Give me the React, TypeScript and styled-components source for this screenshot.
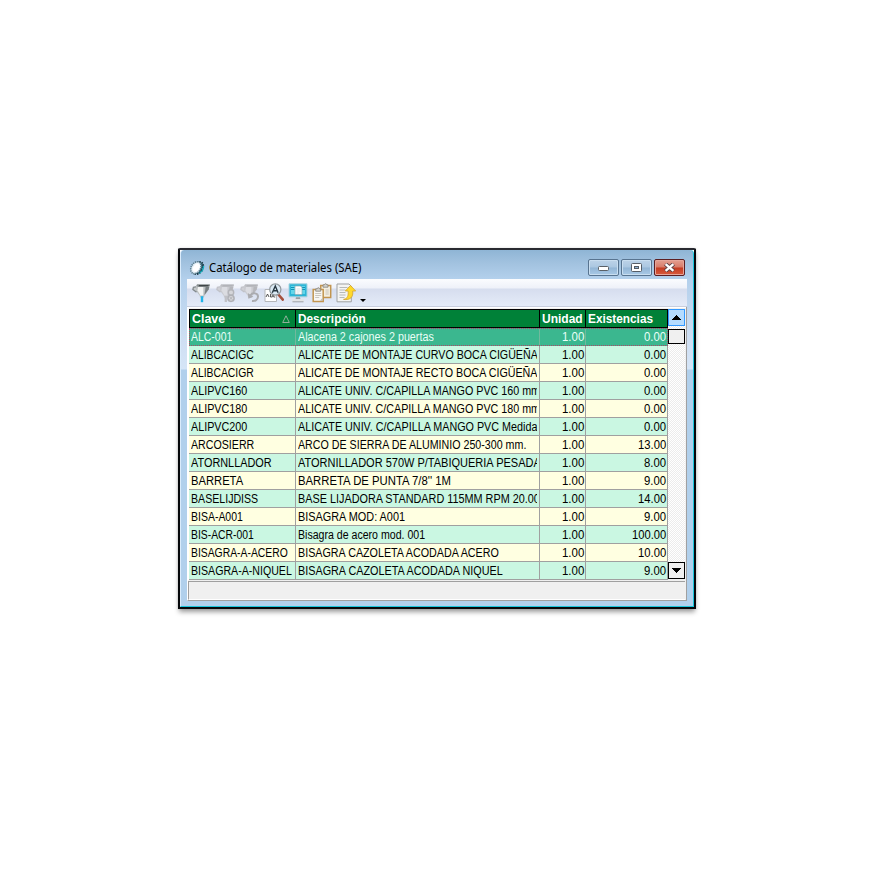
import React, { useLayoutEffect, useRef, useState } from "react";
import styled, { createGlobalStyle, css } from "styled-components";

const GlobalStyle = createGlobalStyle`
  * { box-sizing: border-box; }
  body { margin: 0; background: #fff; }
`;

const Desktop = styled.main`
  width: 880px;
  height: 880px;
  padding: 248px 0 0 178px;
  background: #fff;
`;

const Window = styled.section`
  width: 518px;
  height: 361px;
  border: 2px solid #05070a;
  border-top-color: #292a31;
  border-radius: 2px 2px 0 0;
  box-shadow: 0 4px 5px -1px rgba(0, 0, 0, 0.38), 0 0 3px rgba(0, 0, 0, 0.12);
`;

const Frame = styled.div`
  height: 357px;
  padding: 0 6px 6px 6px;
  border-left: 1px solid #d9ebfb;
  border-right: 1px solid #18c5dc;
  border-bottom: 1px solid #18c5dc;
  border-radius: 4px 4px 0 0;
  background:
    linear-gradient(#8fb5d5 0, #a3c3e0 14px, #b3d0ec 29px, #cfdff3 90px, #d5e5f7 119px, #b1d0ec 120px);
`;

const TitleBar = styled.header`
  display: flex;
  align-items: center;
  height: 29px;
  padding: 6px 2px 0 2px;
`;

const Title = styled.h1`
  flex: 1;
  margin: 0 0 0 4px;
  font: 400 12px/16px "Noto Sans", "Open Sans", sans-serif;
  color: #000;
`;

const Controls = styled.div`
  display: flex;
  gap: 2px;
`;

const ControlButton = styled.button<{ $close?: boolean }>`
  display: grid;
  place-items: center;
  width: 31px;
  height: 17px;
  padding: 0;
  border: 1px solid ${(p) => (p.$close ? "#5c1e22" : "#587490")};
  border-radius: 2px;
  box-shadow: inset 0 0 0 1px ${(p) => (p.$close ? "#e6a69a" : "#c9def0")};
  background: ${(p) =>
    p.$close
      ? "linear-gradient(#e3a091 0, #d87b69 48%, #c33b22 52%, #d95c3e 100%)"
      : "linear-gradient(#bdd3e8 0, #abc7e1 48%, #92b5d5 52%, #a9c9e6 100%)"};
`;

const Toolbar = styled.nav`
  display: flex;
  align-items: center;
  gap: 4px;
  height: 28px;
  padding: 0 0 0 4.5px;
  border-bottom: 1px solid #c8cede;
  background: linear-gradient(#fbfcfe 0, #eef1f9 9px, #d6ddee 10px, #dde4f3 18px, #e4ebf8 27px);
`;

const Drop = styled.div`
  align-self: flex-end;
  width: 6px;
  height: 9px;
  margin-left: 0.5px;
  line-height: 0;
`;

const Client = styled.div`
  height: 294px;
  border-left: 1px solid #fff;
  border-right: 1px solid #a0a0a0;
  border-bottom: 1px solid #a0a0a0;
  background: #f0f0f0;
`;

const GridFrame = styled.div`
  display: flex;
  height: 273px;
  padding: 1px 0 0 0;
  border-top: 1px solid #fff;
  border-left: 1px solid #fff;
`;

const Table = styled.div`
  width: 479px;
`;

const HeaderRow = styled.div`
  display: grid;
  grid-template-columns: 106px 244px 46px 82px;
  height: 19px;
  border-top: 1px solid #000;
  border-bottom: 1px solid #000;
  border-left: 1px solid #000;
  background: #008138;
`;

const HeaderCell = styled.div`
  display: flex;
  align-items: center;
  justify-content: space-between;
  padding: 2px 5px 0 2px;
  border-right: 1px solid #000;
  font: 700 12px/15px "Liberation Sans", Arial, sans-serif;
  color: #fff;
`;

const Row = styled.div<{ $selected: boolean; $even: boolean }>`
  display: grid;
  grid-template-columns: 107px 244px 46px 82px;
  height: 18px;
  color: ${(p) => (p.$selected ? "#eafff7" : "#000")};
  background: ${(p) => (p.$selected ? "#3bb78f" : p.$even ? "#ffffe1" : "#caf7e2")};
  border-bottom: 1px solid #a0a0a0;
  ${(p) =>
    p.$selected &&
    css`
      grid-template-columns: 106px 244px 46px 81px;
      border: 1px dotted #b04468;
    `}
`;

const Cell = styled.div<{ $right?: boolean; $selected?: boolean; $last?: boolean; $first?: boolean }>`
  display: flex;
  justify-content: ${(p) => (p.$right ? "flex-end" : "flex-start")};
  min-width: 0;
  padding: ${(p) => (p.$selected ? 0 : 1)}px ${(p) => (p.$right ? 1 : 2)}px 0
    ${(p) => (p.$selected && p.$first ? 1 : 2)}px;
  border-right: ${(p) => (p.$last && p.$selected ? 0 : 1)}px solid ${(p) => (p.$selected ? "#72b89d" : "#a0a0a0")};
  font: 400 12.5px/16px "Liberation Sans", Arial, sans-serif;
`;

const Clip = styled.div`
  width: 240px;
  overflow: hidden;
`;

const FitBox = styled.span<{ $width: number }>`
  display: block;
  flex: none;
  width: ${(p) => p.$width}px;
  white-space: nowrap;
`;

const FitText = styled.span`
  display: inline-block;
  transform-origin: 0 50%;
`;

/** Condenses or widens a text so that it takes exactly the given width. */
const Fit = ({ width, children }: { width: number; children: string }) => {
  const ref = useRef<HTMLSpanElement>(null);
  const [scale, setScale] = useState(1);
  useLayoutEffect(() => {
    if (ref.current) setScale(width / ref.current.offsetWidth);
  }, [width, children]);
  return (
    <FitBox $width={width}>
      <FitText ref={ref} style={{ transform: `scaleX(${scale})` }}>{children}</FitText>
    </FitBox>
  );
};

const ScrollBar = styled.div`
  display: flex;
  flex-direction: column;
  width: 17px;
  height: 270px;
  background: repeating-conic-gradient(#fff 0 25%, #ececec 0 50%) 0 0 / 2px 2px;
`;

const ScrollButton = styled.button<{ $hot?: boolean }>`
  display: grid;
  place-items: center;
  width: 17px;
  height: 17px;
  padding: 0;
  border: 1px solid ${(p) => (p.$hot ? "#3399ff" : "#000")};
  background: ${(p) => (p.$hot ? "#b5dcff" : "#f0f0f0")};
`;

const Thumb = styled.div`
  width: 17px;
  height: 15px;
  margin: 3px 0 auto;
  border: 1px solid #000;
  background: #f0f0f0;
`;

const StatusBar = styled.footer`
  height: 19px;
  margin: 1px 1px 0 0;
  border-top: 1px solid #a0a0a0;
  border-left: 1px solid #a0a0a0;
  border-bottom: 1px solid #fff;
  background: #f0f0f0;
`;

const AppIcon = () => (
  <svg width="16" height="16" viewBox="0 0 16 16">
    <ellipse cx="9" cy="8" rx="4.6" ry="6.6" transform="rotate(32 9 8)" fill="#2b6274" stroke="#17343f" strokeWidth="1.8" strokeDasharray="1.4 1" />
    <ellipse cx="6.9" cy="7.7" rx="4.6" ry="6.4" transform="rotate(32 6.9 7.7)" fill="#e9f3fa" stroke="#5d7f90" strokeWidth="1.7" strokeDasharray="1.3 .8" />
    <ellipse cx="7.3" cy="7.8" rx="2.9" ry="4.4" transform="rotate(32 7.3 7.8)" fill="#fff" />
    <path d="M10.5 13.3 13.5 10.3 14.8 6" fill="none" stroke="#0fb5c6" strokeWidth="1.2" />
  </svg>
);

const Funnel = ({ faded }: { faded?: boolean }) => (
  <g>
    <path d="M5 3.7 1.4 4.4.9 6.4l3 2.4 1.6-.6" fill={faded ? "#cfd0d5" : "#c6cacc"} stroke={faded ? "#c0c1c7" : "#82898c"} strokeWidth="1.3" />
    <path d="M4 2.5h13.6l-.7 4-4.4 5.9-.6 2H8.2l-.6-2L4 7.8z" fill={faded ? "#c9cacf" : "#bcc0c2"} />
    <path d="M6 4h5.3v8.5H8.4L5.5 7.2z" fill={faded ? "#dbdce1" : "#f2f3f3"} />
    <path d="M13.6 4h3.7l-.6 2.3-4.2 5.6z" fill={faded ? "#b5b6bb" : "#777e81"} />
    <path d="M5 1.2h12.8l.2 1.5-1.5 1.2H6.2L4.4 2.7z" fill={faded ? "#bdbec3" : "#8a9092"} />
    <path d="M6.5 1.9h10l.3.8-1.3.5H7.2z" fill={faded ? "#b2b3b8" : "#3f4548"} />
  </g>
);

const FilterIcon = () => (
  <svg width="20" height="20" viewBox="0 0 20 20">
    <Funnel />
    <path d="M10 13.2v6" stroke="#20b4e9" strokeWidth="2.4" />
  </svg>
);

const FilterOffIcon = () => (
  <svg width="20" height="20" viewBox="0 0 20 20">
    <Funnel faded />
    <path d="M9.8 13v6" stroke="#c0c1c6" strokeWidth="2.3" />
    <circle cx="15" cy="9.5" r="2.7" fill="#d5d6da" stroke="#b4b5ba" strokeWidth="1.4" />
    <circle cx="15" cy="15.3" r="3.1" fill="#d5d6da" stroke="#b0b1b6" strokeWidth="1.5" />
    <path d="m13.5 13.8 3 3m0-3-3 3" stroke="#b4b5b9" />
  </svg>
);

const FilterUndoIcon = () => (
  <svg width="20" height="20" viewBox="0 0 20 20">
    <Funnel faded />
    <path d="M10.5 12.2c2-3 7.7-2.4 7.5 1.6-.1 2.8-2.8 4.6-6 4.2" fill="none" stroke="#aaabaf" strokeWidth="2" />
    <path d="m7.8 10 .6 5.8 5-2z" fill="#aaabaf" />
  </svg>
);

const SearchIcon = () => (
  <svg width="20" height="20" viewBox="0 0 20 20">
    <path d="M1 6.5h11.5v12H1z" fill="#fff" stroke="#b4b6b9" />
    <path d="m2 14 1.5-3L5 14m1.5-3v3h1.8v-3m3 0h-1.6v3h1.6" fill="none" stroke="#444" strokeWidth=".9" />
    <path d="m14.8 12 4 4.6" stroke="#a5503c" strokeWidth="2.6" strokeLinecap="round" />
    <circle cx="11.3" cy="6.5" r="5.6" fill="#dbeaf5" stroke="#92999e" strokeWidth="1.2" />
    <path d="m8.3 9.8 3-6.8 2.8 6.8M9.3 7.8h4" fill="none" stroke="#273640" strokeWidth="1.4" />
  </svg>
);

const MonitorIcon = () => (
  <svg width="20" height="20" viewBox="0 0 20 20">
    <path d="M1 .8h18v13H1z" fill="#2cb5d7" stroke="#a9d3de" />
    <path d="M3 3h4v8H3zM13.5 3H17v8h-3.5z" fill="#62d5e9" />
    <path d="M3 4.5h3.5m-3.5 2h3.5m7-2H17m-3.5 2H17" stroke="#0e91b8" />
    <path d="M7 3h5.5L14 4.5v7H7z" fill="#fff" stroke="#89a9b1" strokeWidth=".7" />
    <path d="M8.5 6h4m-4 2h4m-4 2h3" stroke="#c3d3d8" strokeWidth=".7" />
    <path d="M8 14.2h4l.5 2.3h-5z" fill="#9a9ea2" />
    <path d="M4 17.4h12" stroke="#e3e5e7" strokeWidth="2.6" />
    <path d="M4.5 18.8h11" stroke="#8c9095" strokeWidth=".8" />
  </svg>
);

const CopyIcon = () => (
  <svg width="20" height="20" viewBox="0 0 20 20">
    <path d="M8.7 2.5h10v12h-10z" fill="#f5efe0" stroke="#c2954f" strokeWidth="1.5" />
    <path d="M11 3.2V1.8h1.5c.2-1.5 2-1.5 2.2 0H16v2.4h-5z" fill="#d4d3ce" stroke="#85817a" strokeWidth=".8" />
    <path d="M1.2 6.5h10v12h-10z" fill="#f8f7f4" stroke="#c2954f" strokeWidth="1.5" />
    <path d="M3.7 7.2V5.8h1.5c.2-1.5 2-1.5 2.2 0h1.3v2.4h-5z" fill="#d4d3ce" stroke="#85817a" strokeWidth=".8" />
    <path d="M3.2 10.5h6m-6 2h6m-6 2h4M13.5 7h3.3m-3.3 2h3.3m-3.3 2h3.3" stroke="#bdb9b1" strokeWidth=".8" />
    <path d="M8 17.8 10.5 15v2.8z" fill="#bbbab6" />
  </svg>
);

const ExportIcon = () => (
  <svg width="20" height="20" viewBox="0 0 20 20">
    <path d="M1 1h12l2.3 2.3v15.5H1z" fill="#f4f4f3" stroke="#9fa1a2" />
    <path d="M3.5 4.5h8m-8 2.5h6M3.5 9.5h6m-6 2.5h6m-6 2.5h5" stroke="#b0b2b3" strokeWidth=".9" />
    <path d="M7.5 16.4c4.4-.6 5-4.2 4.6-8.4H9.3l5.2-5.6 5.2 5.6h-3c.8 6-2.4 9.4-9.2 8.4z" fill="#ffd92b" stroke="#d3a32c" strokeWidth=".8" />
  </svg>
);

const Triangle = ({ down }: { down?: boolean }) => (
  <svg width="9" height="5" viewBox="0 0 9 5" shapeRendering="crispEdges">
    <path d={down ? "M0 0h9L4.5 5z" : "M4.5 0 9 5H0z"} fill="#000" />
  </svg>
);

type Item = {
  code: string;
  codeWidth: number;
  name: string;
  nameWidth: number;
  stock: string;
};

const item = (code: string, codeWidth: number, name: string, nameWidth: number, stock: string): Item => ({
  code,
  codeWidth,
  name,
  nameWidth,
  stock,
});

const items: Item[] = [
  item("ALC-001", 41, "Alacena 2 cajones 2 puertas", 136, "0.00"),
  item("ALIBCACIGC", 63, "ALICATE DE MONTAJE CURVO BOCA CIGÜEÑA", 239.5, "0.00"),
  item("ALIBCACIGR", 63, "ALICATE DE MONTAJE RECTO BOCA CIGÜEÑA", 239.5, "0.00"),
  item("ALIPVC160", 56, "ALICATE UNIV. C/CAPILLA MANGO PVC 160 mm", 242, "0.00"),
  item("ALIPVC180", 56, "ALICATE UNIV. C/CAPILLA MANGO PVC 180 mm", 242, "0.00"),
  item("ALIPVC200", 56, "ALICATE UNIV. C/CAPILLA MANGO PVC Medida", 239.5, "0.00"),
  item("ARCOSIERR", 63, "ARCO DE SIERRA DE ALUMINIO 250-300 mm.", 228, "13.00"),
  item("ATORNLLADOR", 81, "ATORNILLADOR 570W P/TABIQUERIA PESADA", 243, "8.00"),
  item("BARRETA", 52, "BARRETA DE PUNTA 7/8'' 1M", 153, "9.00"),
  item("BASELIJDISS", 67, "BASE LIJADORA STANDARD 115MM RPM 20.00", 242, "14.00"),
  item("BISA-A001", 52, "BISAGRA MOD: A001", 107, "9.00"),
  item("BIS-ACR-001", 63, "Bisagra de acero mod. 001", 127, "100.00"),
  item("BISAGRA-A-ACERO", 97, "BISAGRA CAZOLETA ACODADA ACERO", 201, "10.00"),
  item("BISAGRA-A-NIQUEL", 101, "BISAGRA CAZOLETA ACODADA NIQUEL", 205, "9.00"),
];

// Six pixels for every digit and three and a half for the decimal point.
const numberWidth = (text: string) => (text.length - 1) * 6.1 + 3.5;

export default function App() {
  return (
    <Desktop>
      <GlobalStyle />
      <Window>
        <Frame>
          <TitleBar>
            <AppIcon />
            <Title><Fit width={152}>Catálogo de materiales (SAE)</Fit></Title>
            <Controls>
              <ControlButton aria-label="Minimizar">
                <svg width="13" height="9" viewBox="0 0 13 9">
                  <rect x="1.5" y="3.5" width="10" height="4" rx="1" fill="#fff" stroke="#5a6066" />
                </svg>
              </ControlButton>
              <ControlButton aria-label="Maximizar">
                <svg width="11" height="9" viewBox="0 0 11 9">
                  <rect x=".5" y=".5" width="10" height="8" rx="1" fill="#fff" stroke="#555d66" />
                  <rect x="3.5" y="3.5" width="4" height="2" fill="#8fb1d2" stroke="#555d66" />
                </svg>
              </ControlButton>
              <ControlButton $close aria-label="Cerrar">
                <svg width="13" height="9" viewBox="0 0 13 9">
                  <path d="m2.4 1 8.2 7m0-7-8.2 7" stroke="#5c4145" strokeWidth="4.2" />
                  <path d="m2.6 1.2 7.8 6.6m0-6.6L2.6 7.8" stroke="#fff" strokeWidth="2.4" />
                </svg>
              </ControlButton>
            </Controls>
          </TitleBar>
          <Toolbar>
            <FilterIcon />
            <FilterOffIcon />
            <FilterUndoIcon />
            <SearchIcon />
            <MonitorIcon />
            <CopyIcon />
            <ExportIcon />
            <Drop>
              <svg width="6" height="3" viewBox="0 0 6 3">
                <path d="M0 0h6L3 3z" fill="#000" />
              </svg>
            </Drop>
          </Toolbar>
          <Client>
            <GridFrame>
              <Table>
                <HeaderRow>
                  <HeaderCell>
                    <Fit width={33}>Clave</Fit>
                    <svg width="8" height="10" viewBox="0 0 8 10">
                      <path d="M4 .8.7 7.5h6.6z" fill="none" stroke="#a0b5a6" strokeWidth=".9" />
                    </svg>
                  </HeaderCell>
                  <HeaderCell><Fit width={68}>Descripción</Fit></HeaderCell>
                  <HeaderCell><Fit width={41}>Unidad</Fit></HeaderCell>
                  <HeaderCell><Fit width={65}>Existencias</Fit></HeaderCell>
                </HeaderRow>
                {items.map(({ code, codeWidth, name, nameWidth, stock }, i) => {
                  const selected = i === 0;
                  return (
                    <Row key={code} $selected={selected} $even={i % 2 === 0}>
                      <Cell $selected={selected} $first><Fit width={codeWidth}>{code}</Fit></Cell>
                      <Cell $selected={selected}>
                        <Clip><Fit width={nameWidth}>{name}</Fit></Clip>
                      </Cell>
                      <Cell $selected={selected} $right><Fit width={22}>1.00</Fit></Cell>
                      <Cell $selected={selected} $right $last><Fit width={numberWidth(stock)}>{stock}</Fit></Cell>
                    </Row>
                  );
                })}
              </Table>
              <ScrollBar>
                <ScrollButton $hot aria-label="Subir"><Triangle /></ScrollButton>
                <Thumb />
                <ScrollButton aria-label="Bajar"><Triangle down /></ScrollButton>
              </ScrollBar>
            </GridFrame>
            <StatusBar />
          </Client>
        </Frame>
      </Window>
    </Desktop>
  );
}
